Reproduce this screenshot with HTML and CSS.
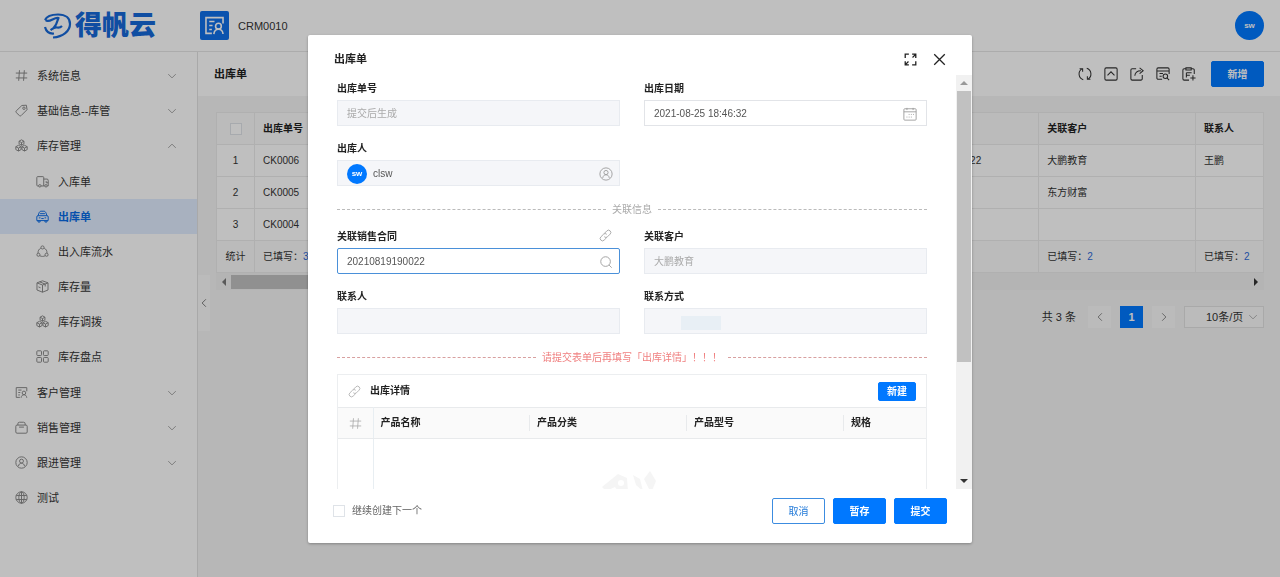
FILE: index.html
```html
<!DOCTYPE html>
<html lang="zh-CN">

<head>
    <meta charset="utf-8">
    <title>出库单 - CRM0010</title>
    <link rel="stylesheet" href="styles.css">
</head>

<body>
    <!-- 公用图标 -->
    <svg class="sprite" aria-hidden="true">
        <symbol id="hash" viewBox="0 0 16 16"><path d="M5.5 1.5 4.5 14.5M11.5 1.5 10.5 14.5M1 5h14M1 11h14" /></symbol>
        <symbol id="tag" viewBox="0 0 16 16"><path d="M8.5 1.8 14 1.5 14.8 7 7.5 14.3a1.5 1.5 0 0 1-2 0L1.5 10.5a1.5 1.5 0 0 1 0-2z" /><circle cx="11" cy="5.2" r="1.5" /></symbol>
        <symbol id="cubes" viewBox="0 0 16 16"><path d="M8 1 11 2.7V6L8 7.7 5 6V2.7zM4.3 7.7 7.5 9.5V13L4.3 14.8 1 13V9.5zM11.7 7.7 15 9.5V13L11.7 14.8 8.5 13V9.5zM5 2.7 8 4.4 11 2.7M8 4.4V7.7M1 9.5 4.3 11.2 7.5 9.5M4.3 11.2V14.8M8.5 9.5 11.7 11.2 15 9.5M11.7 11.2V14.8" /></symbol>
        <symbol id="truck" viewBox="0 0 16 16"><path d="M3.200 13.500H2A1 1 0 0 1 1 12.500V3a1 1 0 0 1 1-1h6.500a1 1 0 0 1 1 1v10.500H6.200M9.500 5H13.500a1.500 1.500 0 0 1 1.500 1.500v7h-1.200M9.500 13.500h1.300M12.500 7.500v2H15" /><circle cx="4.700" cy="13.300" r="1.500" /><circle cx="12.300" cy="13.300" r="1.500" /></symbol>
        <symbol id="car" viewBox="0 0 16 16"><path d="M2.500 7 3.800 3.500C4.300 2 5.300 1.500 6.300 1.500h3.400c1 0 2 .5 2.500 2L13.500 7M2.500 7h11A1.500 1.500 0 0 1 15 8.500V13H1V8.500A1.500 1.500 0 0 1 2.500 7zM2.500 13v1.800h2.500V13M11 13v1.800h2.500V13M3.500 9.700h2M10.500 9.700h2M6.500 10.500h3M5 4.500h6" /></symbol>
        <symbol id="cycle" viewBox="0 0 16 16"><circle cx="8" cy="3" r="1.9" /><circle cx="3" cy="12" r="1.9" /><circle cx="13" cy="12" r="1.9" /><path d="M6 3.800C3.500 5 2.300 7.300 2.500 10M10 3.800c2.500 1.200 3.700 3.500 3.500 6.200M4.800 13.300c2 1 4.400 1 6.400 0" /></symbol>
        <symbol id="box" viewBox="0 0 16 16"><path d="M8 1 14.800 3.500V12.300L8 15 1.200 12.300V3.500zM1.200 3.500 8 6.200 14.800 3.500M8 6.200V15M4.500 2.300 11.300 5v3M3 8.500 5.500 9.500" /></symbol>
        <symbol id="grid" viewBox="0 0 16 16"><rect x="1" y="1" width="5.800" height="5.800" rx="1" /><rect x="9.200" y="1" width="5.800" height="5.800" rx="1" /><rect x="1" y="9.200" width="5.800" height="5.800" rx="1" /><rect x="9.200" y="9.200" width="5.800" height="5.800" rx="1" /></symbol>
        <symbol id="crm" viewBox="0 0 16 16"><path d="M6 14H1.500V2h13v4.500M4 5h4M4 8h2.500M4 11h2M7.500 14.500c.3-2.500 1.700-3.700 3.500-3.700s3.300 1.200 3.500 3.700" /><circle cx="11" cy="8.500" r="2.200" /></symbol>
        <symbol id="bag" viewBox="0 0 16 16"><rect x="1" y="5" width="14" height="10" rx="1.500" /><path d="M3.500 5V3.500A2 2 0 0 1 5.500 1.500h5a2 2 0 0 1 2 2V5M5 7.500h6" /></symbol>
        <symbol id="user" viewBox="0 0 16 16"><circle cx="8" cy="8" r="7" /><circle cx="8" cy="6.300" r="2.400" /><path d="M4.300 12.500c.3-2.400 1.700-3.600 3.700-3.600s3.400 1.200 3.700 3.600" /></symbol>
        <symbol id="globe" viewBox="0 0 16 16"><circle cx="8" cy="8" r="7" /><ellipse cx="8" cy="8" rx="3.300" ry="7" /><path d="M8 1v14M1.500 5.500h13M1.500 10.500h13" /></symbol>
        <symbol id="down" viewBox="0 0 16 16"><path d="M2 5l6 6 6-6" /></symbol>
        <symbol id="up" viewBox="0 0 16 16"><path d="M2 11l6-6 6 6" /></symbol>
        <symbol id="left" viewBox="0 0 16 16"><path d="M11 2 5 8l6 6" /></symbol>
        <symbol id="right" viewBox="0 0 16 16"><path d="M5 2l6 6-6 6" /></symbol>
        <symbol id="link" viewBox="0 0 16 16"><path d="M6.500 5.500 9.700 2.300a2.800 2.800 0 0 1 4 4L10.500 9.500a2.800 2.800 0 0 1-4 0M9.500 10.500 6.300 13.700a2.800 2.800 0 0 1-4-4L5.500 6.500a2.800 2.800 0 0 1 4 0" /></symbol>
    </svg>

    <header class="topbar">
        <div class="logo">
            <svg viewBox="0 0 28 26"><path d="M1 7C3 2.500 8 1.500 14 1.500c8 0 12 4 12 9.500 0 7-7 13-17 13.500M1.500 7c2 2 5 .5 7-.5s4-2 6-1.500c-1 4-3 8-6 11.500M6.500 17c3-2 4-3 6.500-2.500s3.500 0 5-1.500M1 14c1 4 4 7 9 6.500" /></svg>
            <span>得帆云</span>
        </div>
        <div class="app-icon"><svg class="icon"><use href="#crm" /></svg></div>
        <span class="app-name">CRM0010</span>
        <span class="avatar avatar-lg">sw</span>
    </header>

    <div class="layout">
        <nav class="sidebar">
            <a href="#"><svg class="icon"><use href="#hash" /></svg><span>系统信息</span><svg class="icon arrow"><use href="#down" /></svg></a>
            <a href="#"><svg class="icon"><use href="#tag" /></svg><span>基础信息--库管</span><svg class="icon arrow"><use href="#down" /></svg></a>
            <a href="#"><svg class="icon"><use href="#cubes" /></svg><span>库存管理</span><svg class="icon arrow"><use href="#up" /></svg></a>
            <div class="submenu">
                <a href="#"><svg class="icon"><use href="#truck" /></svg><span>入库单</span></a>
                <a href="#" class="active"><svg class="icon"><use href="#car" /></svg><span>出库单</span></a>
                <a href="#"><svg class="icon"><use href="#cycle" /></svg><span>出入库流水</span></a>
                <a href="#"><svg class="icon"><use href="#box" /></svg><span>库存量</span></a>
                <a href="#"><svg class="icon"><use href="#cubes" /></svg><span>库存调拨</span></a>
                <a href="#"><svg class="icon"><use href="#grid" /></svg><span>库存盘点</span></a>
            </div>
            <a href="#"><svg class="icon"><use href="#crm" /></svg><span>客户管理</span><svg class="icon arrow"><use href="#down" /></svg></a>
            <a href="#"><svg class="icon"><use href="#bag" /></svg><span>销售管理</span><svg class="icon arrow"><use href="#down" /></svg></a>
            <a href="#"><svg class="icon"><use href="#user" /></svg><span>跟进管理</span><svg class="icon arrow"><use href="#down" /></svg></a>
            <a href="#"><svg class="icon"><use href="#globe" /></svg><span>测试</span></a>
        </nav>

        <main class="main">
            <button class="collapse" aria-label="收起菜单"><svg class="icon"><use href="#left" /></svg></button>
            <div class="page-head">
                <h1>出库单</h1>
                <div class="tools">
                    <button aria-label="刷新"><svg class="icon" viewBox="0 0 16 16"><path d="M6 14.500A6.800 6.800 0 0 1 4.500 2.200M1.800 2h3.500v3.500M10 1.500A6.800 6.800 0 0 1 11.500 13.800M14.200 14h-3.500v-3.500" /></svg></button>
                    <button aria-label="收起"><svg class="icon" viewBox="0 0 16 16"><rect x="1" y="1" width="14" height="14" rx="1.500" /><path d="M4 9.500 8 5.500l4 4" /></svg></button>
                    <button aria-label="导出"><svg class="icon" viewBox="0 0 16 16"><path d="M7 2H2.500A1.500 1.500 0 0 0 1 3.500v10A1.500 1.500 0 0 0 2.500 15h10a1.500 1.500 0 0 0 1.500-1.500V9M5.500 10c.3-4 3-5.800 7-5.800M11 1l4 3.200-4 3.300" /></svg></button>
                    <button aria-label="筛选"><svg class="icon" viewBox="0 0 16 16"><path d="M7 14H2.500A1.500 1.500 0 0 1 1 12.500v-10A1.500 1.500 0 0 1 2.500 1h11A1.500 1.500 0 0 1 15 2.500V8M1 4.500h14M4 7.500h4M4 10.500h2.500M12.500 12.500 15 15" /><circle cx="10.700" cy="10.500" r="2.600" /></svg></button>
                    <button aria-label="导入"><svg class="icon" viewBox="0 0 16 16"><path d="M8 15H2.500A1.500 1.500 0 0 1 1 13.500v-10A1.500 1.500 0 0 1 2.500 2H4M11 2h1.500A1.500 1.500 0 0 1 14 3.500V8M4.500 1h6v2.500h-6zM5 6.500h6M5 9.500h4M5 6.500V12M12.500 9.500v6M9.500 12.500h6" /></svg></button>
                    <button class="btn primary">新增</button>
                </div>
            </div>

            <div class="content">
                <div class="table-wrap">
                    <table class="list">
                        <colgroup>
                            <col class="col-index">
                            <col><col><col><col><col><col><col>
                        </colgroup>
                        <thead>
                            <tr>
                                <th><input type="checkbox" aria-label="全选"></th>
                                <th>出库单号</th>
                                <th></th>
                                <th></th>
                                <th></th>
                                <th></th>
                                <th>关联客户</th>
                                <th>联系人</th>
                            </tr>
                        </thead>
                        <tbody>
                            <tr><td>1</td><td>CK0006</td><td></td><td></td><td></td><td><svg class="icon rel"><use href="#link" /></svg>20210819190022</td><td>大鹏教育</td><td>王鹏</td></tr>
                            <tr><td>2</td><td>CK0005</td><td></td><td></td><td></td><td></td><td>东方财富</td><td></td></tr>
                            <tr><td>3</td><td>CK0004</td><td></td><td></td><td></td><td></td><td></td><td></td></tr>
                        </tbody>
                        <tfoot>
                            <tr><td>统计</td><td>已填写：<b>3</b></td><td></td><td></td><td></td><td></td><td>已填写：<b>2</b></td><td>已填写：<b>2</b></td></tr>
                        </tfoot>
                    </table>
                </div>
                <div class="hbar">
                    <svg viewBox="0 0 6 8"><path d="M5 0v8L1 4z" /></svg>
                    <div class="track"><div class="thumb"></div></div>
                    <svg class="dark" viewBox="0 0 6 8"><path d="M1 0v8l4-4z" /></svg>
                </div>
                <div class="pager">
                    <span>共 3 条</span>
                    <button aria-label="上一页"><svg class="icon"><use href="#left" /></svg></button>
                    <button class="current">1</button>
                    <button aria-label="下一页"><svg class="icon"><use href="#right" /></svg></button>
                    <div class="page-size">
                        <select aria-label="每页条数"><option>10条/页</option></select>
                        <svg class="icon"><use href="#down" /></svg>
                    </div>
                </div>
            </div>
        </main>
    </div>

    <div class="mask">
        <div class="modal" role="dialog" aria-labelledby="dlg-title">
            <div class="modal-head">
                <h2 id="dlg-title">出库单</h2>
                <button aria-label="全屏"><svg class="icon" viewBox="0 0 16 16"><path d="M1.500 6V1.500H6M10 1.500h4.500V6M14.500 10v4.500H10M6 14.500H1.500V10M14 2l-3.500 3.500M2 14l3.500-3.500" /></svg></button>
                <button aria-label="关闭"><svg class="icon" viewBox="0 0 16 16"><path d="M1.500 1.500l13 13M14.500 1.500l-13 13" /></svg></button>
            </div>

            <div class="modal-body">
                <form class="form" id="stock-out">
                    <div class="fields">
                        <div class="field">
                            <label for="no">出库单号</label>
                            <div class="control disabled"><input id="no" type="text" placeholder="提交后生成" disabled></div>
                        </div>
                        <div class="field">
                            <label for="date">出库日期</label>
                            <div class="control">
                                <input id="date" type="text" value="2021-08-25 18:46:32">
                                <svg class="icon" viewBox="0 0 16 16"><rect x="1" y="2" width="14" height="13" rx="1" /><path d="M1 5.500h14M4.500 1v2.500M11.500 1v2.500M6.500 8.500h1M9 8.500h1M11.500 8.500h1M4 11.500h1M6.500 11.500h1M9 11.500h1" /></svg>
                            </div>
                        </div>
                        <div class="field">
                            <label for="owner">出库人</label>
                            <div class="control disabled">
                                <span class="avatar">sw</span>
                                <input id="owner" class="with-avatar" type="text" value="clsw" readonly>
                                <svg class="icon"><use href="#user" /></svg>
                            </div>
                        </div>
                    </div>

                    <div class="divider">关联信息</div>

                    <div class="fields">
                        <div class="field">
                            <div class="label-row">
                                <label for="contract">关联销售合同</label>
                                <svg class="icon"><use href="#link" /></svg>
                            </div>
                            <div class="control focus">
                                <input id="contract" type="text" value="20210819190022">
                                <svg class="icon" viewBox="0 0 16 16"><circle cx="7.500" cy="7.500" r="5.500" /><path d="M11.500 11.500l3 3" /></svg>
                            </div>
                        </div>
                        <div class="field">
                            <label for="customer">关联客户</label>
                            <div class="control disabled"><input id="customer" type="text" value="大鹏教育" disabled></div>
                        </div>
                        <div class="field">
                            <label for="contact">联系人</label>
                            <div class="control disabled"><input id="contact" type="text" disabled></div>
                        </div>
                        <div class="field">
                            <label for="phone">联系方式</label>
                            <div class="control disabled masked"><input id="phone" type="text" disabled></div>
                        </div>
                    </div>

                    <div class="divider warn">请提交表单后再填写「出库详情」！！！</div>

                    <div class="detail">
                        <div class="detail-head">
                            <svg class="icon"><use href="#link" /></svg>
                            <h3>出库详情</h3>
                            <button type="button" class="btn primary small">新建</button>
                        </div>
                        <table>
                            <colgroup>
                                <col class="col-hash">
                                <col class="col-text"><col class="col-text"><col class="col-text">
                                <col>
                            </colgroup>
                            <thead>
                                <tr>
                                    <th aria-label="序号"><svg class="icon"><use href="#hash" /></svg></th>
                                    <th><span>产品名称</span></th>
                                    <th><span>产品分类</span></th>
                                    <th><span>产品型号</span></th>
                                    <th>规格</th>
                                </tr>
                            </thead>
                            <tbody>
                                <tr>
                                    <td></td>
                                    <td colspan="4">
                                        <svg class="empty" viewBox="0 0 64 30"><path d="M2 20 18 7l9 4 1 14-8 2-5-7-9 4zM33 8l7 4 3 12-7-6zM44 12l6-8 6 10-5 12z" /><circle cx="21" cy="16" r="3" fill="#fff" /></svg>
                                    </td>
                                </tr>
                            </tbody>
                        </table>
                    </div>
                </form>
                <div class="vbar">
                    <svg viewBox="0 0 8 6"><path d="M0 5h8L4 1z" /></svg>
                    <div class="track"><div class="thumb"></div></div>
                    <svg class="dark" viewBox="0 0 8 6"><path d="M0 1h8L4 5z" /></svg>
                </div>
            </div>

            <div class="modal-foot">
                <label><input type="checkbox">继续创建下一个</label>
                <button class="btn">取消</button>
                <button class="btn primary">暂存</button>
                <button class="btn primary" type="submit" form="stock-out">提交</button>
            </div>
        </div>
    </div>
</body>

</html>
```

FILE: styles.css
```css
* {
    box-sizing: border-box;
}

html,
body {
    margin: 0;
    height: 100%;
    overflow: hidden;
}

body {
    display: flex;
    flex-direction: column;
    background-color: #f5f5f5;
    color: #333;
    font-family: "Liberation Sans", "Noto Sans CJK SC", sans-serif;
    font-size: 10px;
    line-height: 16px;
}

h1,
h2,
h3 {
    margin: 0;
    font-size: 11px;
    color: #222;
}

h3 {
    font-size: 10px;
}

a {
    color: inherit;
    text-decoration: none;
}

button,
input,
select {
    margin: 0;
    font: inherit;
    color: inherit;
}

button {
    display: flex;
    align-items: center;
    justify-content: center;
    padding: 0;
    border: 0;
    background: none;
    cursor: pointer;
}

table {
    width: 100%;
    border-collapse: collapse;
    table-layout: fixed;
}

input[type="checkbox"] {
    appearance: none;
    width: 12px;
    height: 12px;
    border: 1px solid #dfe3e8;
    background-color: #fff;
}

.sprite {
    display: none;
}

.icon {
    flex: none;
    width: 13px;
    height: 13px;
    fill: none;
    stroke: currentColor;
    stroke-width: 1.2;
}

.btn {
    width: 53px;
    height: 26px;
    padding-top: 1px;
    border: 1px solid #3c8ce0;
    border-radius: 2px;
    background-color: #fff;
    color: #1f78d8;
}

.btn.primary {
    border-color: #0078ff;
    background-color: #0078ff;
    color: #fff;
    font-weight: bold;
}

.btn.small {
    width: 38px;
    height: 19px;
}

.avatar {
    display: flex;
    flex: none;
    align-items: center;
    justify-content: center;
    width: 20px;
    height: 20px;
    border-radius: 50%;
    background-color: #0078ff;
    color: #fff;
    font-size: 8px;
    font-weight: bold;
}

.avatar-lg {
    width: 29px;
    height: 29px;
    margin-left: auto;
}

/* 顶栏 */
.topbar {
    display: flex;
    flex: none;
    align-items: center;
    height: 52px;
    padding: 0 16px 0 44px;
    border-bottom: 1px solid #e6e6e6;
    background-color: #fff;
}

.logo {
    display: flex;
    align-items: center;
    gap: 3px;
    width: 156px;
    color: #1668d8;
    font-size: 27px;
    font-weight: 900;
    line-height: 32px;
}

.logo svg {
    width: 28px;
    height: 26px;
    fill: none;
    stroke: currentColor;
    stroke-width: 2.2;
    stroke-linejoin: round;
}

.app-icon {
    display: flex;
    align-items: center;
    justify-content: center;
    width: 29px;
    height: 29px;
    border-radius: 2px;
    background-color: #0f6fe8;
    color: #fff;
}

.app-icon .icon {
    width: 21px;
    height: 21px;
}

.app-name {
    margin-left: 9px;
    font-size: 11px;
}

.layout {
    display: flex;
    flex: 1;
    min-height: 0;
}

/* 左侧菜单 */
.sidebar {
    flex: none;
    width: 198px;
    padding-top: 6px;
    border-right: 1px solid #e2e2e2;
    background-color: #fff;
    font-size: 11px;
}

.sidebar a {
    display: flex;
    align-items: center;
    gap: 9px;
    height: 35px;
    padding: 0 20px 0 15px;
}

.sidebar .icon {
    color: #888;
}

.sidebar .arrow {
    width: 10px;
    height: 10px;
    margin-left: auto;
}

.submenu {
    padding: 1px 0;
}

.submenu a {
    padding-left: 36px;
}

.sidebar .active,
.sidebar .active .icon {
    color: #0a6be6;
}

.sidebar .active {
    background-color: #e0edff;
    font-weight: bold;
}

/* 列表页 */
.main {
    position: relative;
    flex: 1;
    min-width: 0;
}

.collapse {
    position: absolute;
    top: 223px;
    left: 0;
    width: 12px;
    height: 56px;
    background-color: #fafafa;
    color: #555;
}

.collapse .icon {
    width: 10px;
    height: 10px;
}

.page-head {
    display: flex;
    align-items: center;
    justify-content: space-between;
    height: 44px;
    padding: 0 16px;
    background-color: #fff;
}

.tools {
    display: flex;
    align-items: center;
    gap: 12px;
}

.tools .icon {
    width: 14px;
    height: 14px;
}

.tools .btn {
    margin-left: 3px;
}

.content {
    padding: 16px 16px 0 18px;
}

.table-wrap {
    overflow: hidden;
    border: 1px solid #ebebeb;
    border-width: 0 1px 0 0;
}

.list {
    width: 1137px;
    background-color: #fff;
}

.col-index {
    width: 38px;
}

.list th,
.list td {
    height: 32px;
    padding: 0 8px;
    border: 1px solid #ebebeb;
    text-align: left;
    white-space: nowrap;
}

.list th {
    background-color: #fafafa;
    color: #222;
}

.list th:first-child,
.list td:first-child {
    padding: 0;
    text-align: center;
}

.list th input {
    display: block;
    margin: 0 auto;
}

.list tfoot {
    background-color: #fafafa;
}

.list b {
    color: #2f6ad8;
    font-weight: normal;
}

.rel {
    width: 10px;
    height: 10px;
    margin-right: 3px;
    vertical-align: middle;
}

.hbar,
.vbar {
    display: flex;
    align-items: center;
    background-color: #f1f1f1;
}

.hbar {
    gap: 4px;
    height: 17px;
    padding: 0 5px;
}

.hbar svg {
    width: 6px;
    height: 8px;
    fill: #777;
}

.hbar .dark,
.vbar .dark {
    fill: #333;
}

.track {
    flex: 1;
}

.thumb {
    background-color: #c1c1c1;
}

.hbar .thumb {
    width: 65%;
    height: 14px;
}

.pager {
    display: flex;
    align-items: center;
    justify-content: flex-end;
    gap: 9px;
    margin-top: 16px;
    font-size: 11px;
}

.pager span {
    margin-right: 3px;
}

.pager button {
    width: 23px;
    height: 22px;
    background-color: #fafafa;
    color: #666;
}

.pager .icon {
    width: 10px;
    height: 10px;
}

.pager .current {
    background-color: #0078ff;
    color: #fff;
    font-weight: bold;
}

.page-size {
    display: flex;
    align-items: center;
    width: 80px;
    height: 22px;
    padding: 0 5px 0 21px;
    border: 1px solid #e2e2e2;
    background-color: #fafafa;
}

.page-size select {
    flex: 1;
    min-width: 0;
    padding: 0;
    border: 0;
    background: none;
    appearance: none;
}

.page-size .icon {
    color: #999;
}

/* 弹窗 */
.mask {
    position: fixed;
    inset: 0;
    display: flex;
    justify-content: center;
    padding: 35px 16px 34px;
    background-color: rgba(0, 0, 0, 0.25);
}

.modal {
    display: flex;
    flex-direction: column;
    width: 100%;
    max-width: 664px;
    border-radius: 2px;
    background-color: #fff;
    box-shadow: 0 1px 3px rgba(0, 0, 0, 0.3);
}

.modal-head {
    display: flex;
    flex: none;
    align-items: center;
    gap: 16px;
    height: 40px;
    padding: 8px 26px 0;
}

.modal-head h2 {
    flex: 1;
}

.modal-head .icon {
    color: #222;
    stroke-width: 1.6;
}

.modal-body {
    display: flex;
    flex: 1;
    min-height: 0;
}

.form {
    flex: 1;
    overflow: hidden;
    padding: 6px 29px 0;
}

.fields {
    display: grid;
    grid-template-columns: 1fr 1fr;
    gap: 15px 24px;
}

.field label {
    display: block;
    height: 15px;
    margin-bottom: 4px;
    color: #222;
    font-weight: bold;
    line-height: 16px;
}

.label-row {
    display: flex;
    justify-content: space-between;
    padding-right: 8px;
    color: #aaa;
}

.control {
    display: flex;
    align-items: center;
    height: 26px;
    padding: 1px 9px 0;
    border: 1px solid #e2e4e8;
    background-color: #fff;
    color: #555;
}

.control input {
    flex: 1;
    min-width: 0;
    padding: 0;
    border: 0;
    outline: 0;
    background: none;
}

.control input::placeholder,
.control input:disabled {
    color: #aaa;
}

.control .with-avatar {
    margin-left: 6px;
}

.control .icon {
    width: 14px;
    height: 14px;
    color: #999;
    stroke-width: 1;
}

.control.disabled {
    padding-right: 6px;
    border-color: #e8ebf0;
    background-color: #f5f6f9;
}

.control.focus {
    padding-right: 6px;
    border-color: #4a90d9;
    border-radius: 2px;
}

/* 号码打码 */
.control.masked {
    background-image: linear-gradient(#e8eff5, #e8eff5);
    background-position: 36px 7px;
    background-size: 40px 14px;
    background-repeat: no-repeat;
}

.divider {
    display: flex;
    align-items: center;
    gap: 6px;
    margin-top: 15px;
    color: #aaa;
    line-height: 17px;
}

.divider::before,
.divider::after {
    content: "";
    flex: 1;
    border-top: 1px dashed #bbb;
}

.divider.warn {
    color: #f08080;
}

.divider.warn::before,
.divider.warn::after {
    border-color: #d8a0a0;
}

.divider + .fields {
    margin-top: 11px;
}

.detail {
    margin-top: 8px;
    border: 1px solid #eceef0;
}

.detail-head {
    display: flex;
    align-items: center;
    gap: 9px;
    height: 32px;
    padding: 0 10px;
}

.detail-head .btn {
    margin-left: auto;
}

.detail .icon {
    color: #aaa;
    stroke-width: 1;
}

.col-hash {
    width: 35px;
}

.col-text {
    width: 157px;
}

.detail th {
    height: 31px;
    padding: 0 0 0 7px;
    border: 1px solid #e8eaec;
    border-width: 1px 0;
    background-color: #fafafa;
    color: #222;
    text-align: left;
}

.detail th span {
    display: block;
    border-right: 1px solid #e8eaec;
}

.detail th:first-child {
    padding: 0;
    text-align: center;
}

.detail th .icon {
    display: block;
    margin: 0 auto;
}

.detail td {
    height: 120px;
    padding: 28px 36px 0 0;
    text-align: center;
    vertical-align: top;
}

.detail tr > :first-child {
    border-right: 1px solid #e8eef2;
}

.empty {
    width: 64px;
    height: 30px;
    fill: #f5f5f5;
}

.vbar {
    flex: none;
    flex-direction: column;
    gap: 5px;
    width: 16px;
    padding: 5px 0;
}

.vbar svg {
    width: 8px;
    height: 6px;
    fill: #999;
}

.vbar .thumb {
    width: 14px;
    height: 100%;
}

.vbar .track {
    display: flex;
    padding-bottom: 111px;
}

.modal-foot {
    display: flex;
    flex: none;
    align-items: center;
    gap: 8px;
    padding: 9px 25px 19px;
}

.modal-foot label {
    display: flex;
    align-items: center;
    gap: 7px;
    margin-right: auto;
    color: #666;
}
```
